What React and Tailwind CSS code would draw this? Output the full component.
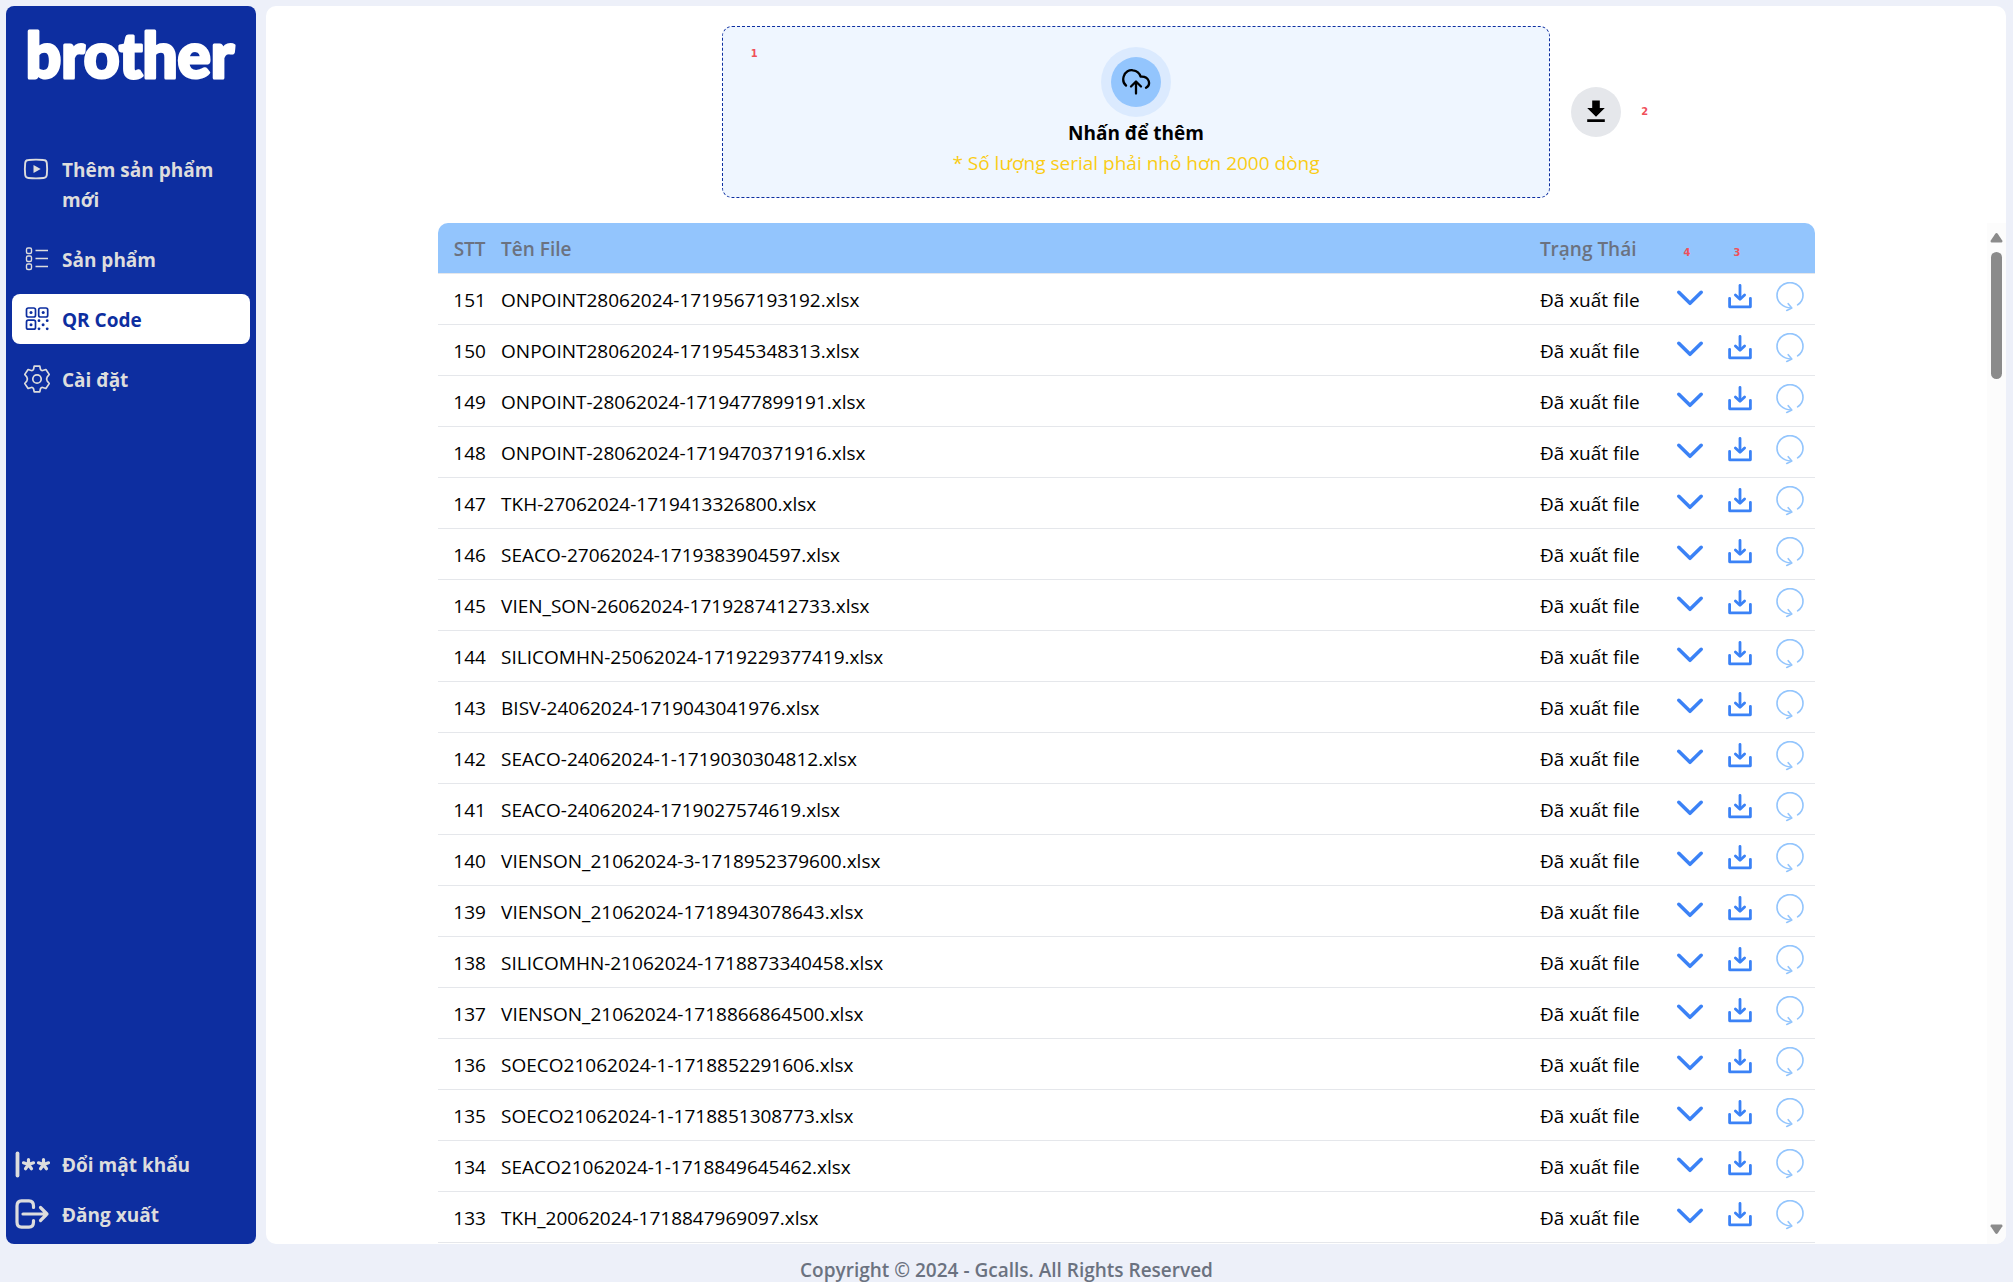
import React from "react";

const FILES = [
    {id: 151, name: "ONPOINT28062024-1719567193192.xlsx"},
    {id: 150, name: "ONPOINT28062024-1719545348313.xlsx"},
    {id: 149, name: "ONPOINT-28062024-1719477899191.xlsx"},
    {id: 148, name: "ONPOINT-28062024-1719470371916.xlsx"},
    {id: 147, name: "TKH-27062024-1719413326800.xlsx"},
    {id: 146, name: "SEACO-27062024-1719383904597.xlsx"},
    {id: 145, name: "VIEN_SON-26062024-1719287412733.xlsx"},
    {id: 144, name: "SILICOMHN-25062024-1719229377419.xlsx"},
    {id: 143, name: "BISV-24062024-1719043041976.xlsx"},
    {id: 142, name: "SEACO-24062024-1-1719030304812.xlsx"},
    {id: 141, name: "SEACO-24062024-1719027574619.xlsx"},
    {id: 140, name: "VIENSON_21062024-3-1718952379600.xlsx"},
    {id: 139, name: "VIENSON_21062024-1718943078643.xlsx"},
    {id: 138, name: "SILICOMHN-21062024-1718873340458.xlsx"},
    {id: 137, name: "VIENSON_21062024-1718866864500.xlsx"},
    {id: 136, name: "SOECO21062024-1-1718852291606.xlsx"},
    {id: 135, name: "SOECO21062024-1-1718851308773.xlsx"},
    {id: 134, name: "SEACO21062024-1-1718849645462.xlsx"},
    {id: 133, name: "TKH_20062024-1718847969097.xlsx"},
];

function PlayIcon() {
    return (
        <svg width="30" height="30" viewBox="0 0 30 30" fill="none" stroke="currentColor" strokeWidth="1.9" aria-hidden="true">
            <path d="M6.500 6Q14 5.200 21.500 6Q24.500 6.200 24.800 9Q25.500 15 24.800 21Q24.500 23.800 21.500 24Q14 24.800 6.500 24Q3.500 23.800 3.200 21Q2.500 15 3.200 9Q3.500 6.200 6.500 6Z"/>
            <path d="M11.500 10.900L18.700 15L11.500 19.100Z" fill="currentColor" stroke="none"/>
        </svg>
    );
}

function ListIcon() {
    return (
        <svg width="30" height="30" viewBox="0 0 30 30" fill="none" stroke="currentColor" strokeWidth="1.4" aria-hidden="true">
            <rect x="4.500" y="4" width="5" height="5.500" rx="1.500"/>
            <rect x="4.500" y="12" width="5" height="5.500" rx="1.500"/>
            <rect x="4.500" y="20" width="5" height="5.500" rx="1.500"/>
            <path d="M13.500 6.500H26M13.500 14.500H26M13.500 22.500H26"/>
        </svg>
    );
}

function QrIcon() {
    return (
        <svg width="30" height="30" viewBox="0 0 30 30" fill="none" stroke="currentColor" strokeWidth="1.7" aria-hidden="true">
            <rect x="4.500" y="4" width="9" height="9" rx="1.800"/>
            <rect x="16.700" y="4" width="9" height="9" rx="1.800"/>
            <rect x="4.500" y="16.200" width="9" height="9" rx="1.800"/>
            <g fill="currentColor" stroke="none">
                <circle cx="9" cy="8.500" r="1.500"/>
                <circle cx="21.200" cy="8.500" r="1.500"/>
                <circle cx="9" cy="20.700" r="1.500"/>
                <circle cx="17" cy="16.700" r="1.400"/>
                <circle cx="25.200" cy="16.700" r="1.400"/>
                <circle cx="21.100" cy="20.700" r="1.500"/>
                <circle cx="17" cy="24.800" r="1.400"/>
                <circle cx="25.200" cy="24.800" r="1.400"/>
            </g>
        </svg>
    );
}

function GearIcon() {
    return (
        <svg width="30" height="30" viewBox="0 0 30 30" fill="none" stroke="currentColor" strokeWidth="1.7" strokeLinejoin="round" aria-hidden="true">
            <circle cx="15" cy="15" r="4.200"/>
            <path d="M12.200 2.200H17.800L18.500 5.400Q19.200 6.700 20.700 6.500L23.900 5.500L27.200 10.400L25.200 13Q24 15 25.200 17L27.200 19.600L23.900 24.500L20.700 23.500Q19.200 23.300 18.500 24.600L17.800 27.800H12.200L11.500 24.600Q10.800 23.300 9.300 23.500L6.100 24.500L2.800 19.600L4.800 17Q6 15 4.800 13L2.800 10.400L6.100 5.500L9.300 6.500Q10.800 6.700 11.500 5.400Z"/>
        </svg>
    );
}

function PasswordIcon() {
    return (
        <svg width="40" height="34" viewBox="0 0 40 34" fill="none" stroke="currentColor" strokeWidth="3.200" strokeLinecap="round" aria-hidden="true">
            <path d="M5.500 5.500V27.500" strokeWidth="3.800"/>
            <path d="M16.500 16.500V11.500M16.500 16.500L11.500 14.800M16.500 16.500L21.500 14.800M16.500 16.500L13.500 20.700M16.500 16.500L19.500 20.700"/>
            <path d="M31.500 16.500V11.500M31.500 16.500L26.500 14.800M31.500 16.500L36.500 14.800M31.500 16.500L28.500 20.700M31.500 16.500L34.500 20.700"/>
        </svg>
    );
}

function LogoutIcon() {
    return (
        <svg width="40" height="34" viewBox="0 0 40 34" fill="none" stroke="currentColor" strokeWidth="3.200" strokeLinecap="round" strokeLinejoin="round" aria-hidden="true">
            <path d="M21.500 9.500V8Q21.500 2.800 17 2.800H9.500Q5 2.800 5 8V24Q5 29.200 9.500 29.200H17Q21.500 29.200 21.500 24V22.500"/>
            <path d="M11 16H35M28.500 9.500L35 16L28.500 22.500"/>
        </svg>
    );
}

function CloudIcon() {
    return (
        <svg width="30" height="30" viewBox="0 0 30 30" fill="none" stroke="currentColor" strokeWidth="2.300" strokeLinecap="round" strokeLinejoin="round" aria-hidden="true">
            <path d="M5 18.500C2.500 16.500 1.800 13 2.600 9.800C4 4.500 8.500 2.700 12 3.300C15.500 3.800 18.500 6 19.600 9.600C23 9.300 26.500 10.500 27.700 14C28.600 17 27.500 19.500 25 20.800"/>
            <path d="M15 26.500V15M10 19.500L15 14.500L20 19.500"/>
        </svg>
    );
}

function TemplateIcon() {
    return (
        <svg width="30" height="30" viewBox="0 0 30 30" fill="currentColor" aria-hidden="true">
            <path d="M11.200 3.500H18.800V11H23.800L15 19.800L6.200 11H11.200Z"/>
            <path d="M6.200 22.300H23.800V25H6.200Z"/>
        </svg>
    );
}

function ChevronIcon() {
    return (
        <svg width="30" height="30" viewBox="0 0 30 30" fill="none" stroke="currentColor" strokeWidth="3.600" strokeLinecap="round" strokeLinejoin="round" aria-hidden="true">
            <path d="M3.800 10.300L15 21.300L26.200 10.300"/>
        </svg>
    );
}

function DownloadIcon() {
    return (
        <svg width="30" height="30" viewBox="0 0 30 30" fill="none" stroke="currentColor" strokeWidth="2.800" strokeLinecap="round" strokeLinejoin="round" aria-hidden="true">
            <path d="M4.600 16.300V24.800H25.400V16.300"/>
            <path d="M15 3.500V16.500"/>
            <path d="M10.400 12.900L15 17.300L19.600 12.900"/>
        </svg>
    );
}

function RefreshIcon() {
    return (
        <svg width="30" height="30" viewBox="0 0 30 30" fill="none" stroke="currentColor" strokeWidth="1.600" strokeLinecap="round" strokeLinejoin="round" aria-hidden="true">
            <path d="M22.600 22.900C25.800 20.700 28 17 28 13.400A13 12.800 0 0 0 2 13.400C2 20 7.800 25.500 16 26"/>
            <path d="M13.200 21.700L16.800 26.100L11.700 28.500"/>
        </svg>
    );
}

const MENU = [
    {label: "Thêm sản phẩm mới", icon: PlayIcon},
    {label: "Sản phẩm", icon: ListIcon},
    {label: "QR Code", icon: QrIcon, active: true},
    {label: "Cài đặt", icon: GearIcon},
];

const ACCOUNT = [
    {label: "Đổi mật khẩu", icon: PasswordIcon},
    {label: "Đăng xuất", icon: LogoutIcon},
];

function Note({children}) {
    return (
        <span className="font-['DejaVu_Sans_Condensed','DejaVu_Sans',sans-serif] text-[11px] leading-3 font-bold text-[#f0505a]">{children}</span>
    );
}

function Sidebar() {
    return (
        <aside className="w-[250px] shrink-0 flex flex-col rounded-lg bg-[#0d2ea0] px-[6px] pb-1 font-bold text-[#dddddd]">
            <div className="h-[138px]">
                <svg width="238" height="96" viewBox="0 0 238 96" role="img" aria-label="brother">
                    <text x="118" y="72" textAnchor="middle" strokeLinejoin="round" className="fill-white stroke-white stroke-3 font-['Lato'] text-[62px] font-black">brother</text>
                </svg>
            </div>
            <nav className="flex flex-col gap-[10px]">
                {MENU.map(({label, icon: Icon, active}) => (
                    <a href="#" key={label}
                       className={active
                           ? "flex items-start gap-[10px] rounded-lg bg-white px-[10px] pt-[11px] pb-[9px] text-[#0d2ea0]"
                           : "flex items-start gap-[10px] rounded-lg px-[10px] pt-[11px] pb-[9px]"}>
                        <span className="-mt-px shrink-0"><Icon/></span>
                        <span>{label}</span>
                    </a>
                ))}
            </nav>
            <div className="mt-auto">
                {ACCOUNT.map(({label, icon: Icon}) => (
                    <button type="button" key={label} className="flex h-[50px] w-full items-center gap-[10px] text-left">
                        <Icon/>
                        <span>{label}</span>
                    </button>
                ))}
            </div>
        </aside>
    );
}

function UploadBar() {
    return (
        <div className="grid shrink-0 grid-cols-[11fr_20fr_11fr] pt-5 pb-[25px]">
            <button type="button"
                    className="relative col-start-2 flex flex-col items-center rounded-[10px] border border-dashed border-[#0d2ea0] bg-[#eff6ff] pt-5 pb-[19px]">
                <span className="absolute top-[21px] left-[28px] flex"><Note>1</Note></span>
                <span className="mb-px rounded-full bg-[#dbeafe] p-[10px]">
                    <span className="flex size-[50px] items-center justify-center rounded-full bg-[#93c5fd]">
                        <CloudIcon/>
                    </span>
                </span>
                <span className="font-bold">Nhấn để thêm</span>
                <span className="text-[#facc15]">* Số lượng serial phải nhỏ hơn 2000 dòng</span>
            </button>
            <div className="flex items-center gap-5 pl-[21px]">
                <button type="button" aria-label="Tải file mẫu"
                        className="flex size-[50px] items-center justify-center rounded-full bg-[#e5e7eb]">
                    <TemplateIcon/>
                </button>
                <Note>2</Note>
            </div>
        </div>
    );
}

function FileTable() {
    return (
        <table className="mx-auto w-4/5 table-fixed border-separate border-spacing-0 text-left">
            <thead>
            <tr className="h-[51px] text-[#6b7280] [&>th]:border-b [&>th]:border-[#e5e7eb] [&>th]:bg-[#93c5fd] [&>th]:pt-[2px] [&>th]:font-semibold">
                <th className="w-[63px] rounded-tl-[10px] pr-[15px] pl-[15px] text-center">STT</th>
                <th>Tên File</th>
                <th className="w-[125px]">Trạng Thái</th>
                <th className="w-[50px] pr-[6px] text-center"><Note>4</Note></th>
                <th className="w-[50px] pr-[6px] text-center"><Note>3</Note></th>
                <th className="w-[50px] rounded-tr-[10px]"/>
            </tr>
            </thead>
            <tbody>
            {FILES.map(({id, name}) => (
                <tr key={id} className="h-[51px] [&>td]:border-b [&>td]:border-[#e5e7eb] [&>td]:pt-[2px]">
                    <td className="text-center">{id}</td>
                    <td>{name}</td>
                    <td>Đã xuất file</td>
                    <td>
                        <button type="button" aria-label="Xem chi tiết" className="flex w-full justify-center pb-[6px] text-[#3b82f6]">
                            <ChevronIcon/>
                        </button>
                    </td>
                    <td>
                        <button type="button" aria-label="Tải xuống" className="flex w-full justify-center pb-[6px] text-[#3b82f6]">
                            <DownloadIcon/>
                        </button>
                    </td>
                    <td>
                        <button type="button" aria-label="Làm mới" className="flex w-full justify-center pb-[6px] text-[#93c5fd]">
                            <RefreshIcon/>
                        </button>
                    </td>
                </tr>
            ))}
            </tbody>
        </table>
    );
}

function ScrollBar() {
    return (
        <div className="flex w-[19px] shrink-0 flex-col items-center bg-[#fcfcfc] py-[9px] text-[#8b8b8b]" aria-hidden="true">
            <svg width="13" height="11" viewBox="0 0 13 11" fill="currentColor">
                <path d="M6.500 1Q7.200 1 7.700 1.700L12.400 8.800Q12.800 10.500 11.500 10.500H1.500Q0.200 10.500 0.600 8.800L5.300 1.700Q5.800 1 6.500 1Z"/>
            </svg>
            <div className="mt-[9px] h-[127px] w-[11px] rounded-full bg-[#8b8b8b]"/>
            <svg className="mt-auto" width="13" height="11" viewBox="0 0 13 11" fill="currentColor">
                <path d="M6.500 10Q5.800 10 5.300 9.300L0.600 2.200Q0.200 0.500 1.500 0.500H11.500Q12.800 0.500 12.400 2.200L7.700 9.300Q7.200 10 6.500 10Z"/>
            </svg>
        </div>
    );
}

export default function App() {
    return (
        <div className="flex h-screen flex-col overflow-hidden bg-[#edf0f9] font-['Open_Sans',sans-serif] text-[19px] leading-[30px] text-black">
            <div className="flex min-h-0 flex-1 gap-[10px] pt-[6px] pr-[7px] pl-[6px]">
                <Sidebar/>
                <main className="flex min-w-0 flex-1 flex-col overflow-hidden rounded-[10px] bg-white">
                    <UploadBar/>
                    <div className="flex min-h-0 flex-1">
                        <div className="min-w-0 flex-1 overflow-hidden">
                            <FileTable/>
                        </div>
                        <ScrollBar/>
                    </div>
                </main>
            </div>
            <footer className="flex h-[38px] shrink-0 items-end justify-center leading-6 font-semibold text-[#6b7280]">
                Copyright © 2024 - Gcalls. All Rights Reserved
            </footer>
        </div>
    );
}
